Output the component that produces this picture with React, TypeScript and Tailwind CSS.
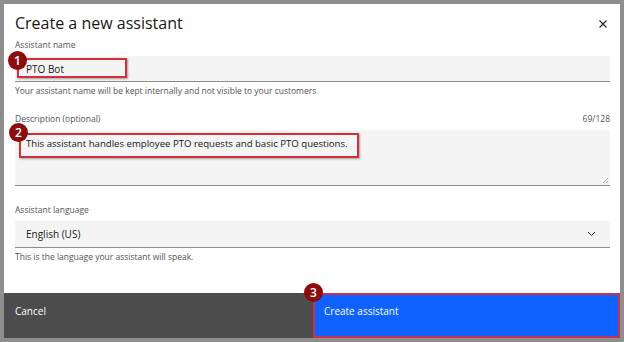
import React from 'react';

const Badge = ({ n, className }: { n: number; className: string }) => (
  <div
    className={`absolute w-[19px] h-[19px] rounded-full bg-[#8b0d0d] text-white text-[12px] font-semibold flex items-center justify-center leading-none ${className}`}
  >
    {n}
  </div>
);

export default function App() {
  return (
    <div
      className="w-[624px] h-[342px] bg-[#8e8e8e] pt-[4px] pl-[4px] overflow-hidden"
      style={{ fontFamily: '"Open Sans", "Noto Sans", sans-serif' }}
    >
      <div className="w-[616px] h-[334px] bg-white flex flex-col relative">
        <div className="flex items-start justify-between pl-[11px] pr-[10px] pt-[9px]">
          <h1 className="text-[16px] leading-[20px] text-[#161616]">Create a new assistant</h1>
          <svg width="10" height="10" viewBox="0 0 10 10" className="mt-[6px] mr-[2px]">
            <path d="M1.5 1.5L8.5 8.5M8.5 1.5L1.5 8.5" stroke="#262626" strokeWidth="1.1" />
          </svg>
        </div>

        <div className="px-[11px] pt-[6px] flex flex-col">
          {/* name */}
          <label className="text-[8.5px] leading-[12px] text-[#525252]">Assistant name</label>
          <div className="relative mt-[5px] h-[26px] bg-[#f4f4f4] border-b border-[#8d8d8d] flex items-center pl-[11px] w-[595px]">
            <div className="text-[10px] leading-[14px] text-[#161616]">PTO Bot</div>
            <div className="absolute left-[2px] top-[2px] w-[110px] h-[20px] border-2 border-[#d32f3a] shadow-[1px_1px_2px_rgba(0,0,0,0.35)]" />
            <Badge n={1} className="-left-[7px] -top-[5px]" />
          </div>
          <p className="text-[8.5px] leading-[12px] text-[#525252] mt-[3px]">
            Your assistant name will be kept internally and not visible to your customers
          </p>

          {/* description */}
          <div className="flex justify-between mt-[16px] w-[595px]">
            <label className="text-[8.5px] leading-[12px] text-[#525252]">Description (optional)</label>
            <span className="text-[8.5px] leading-[12px] text-[#525252]">69/128</span>
          </div>
          <div className="relative mt-[5px] h-[56px] bg-[#f4f4f4] border-b border-[#8d8d8d] pl-[11px] pt-[7px] w-[595px]">
            <div className="text-[9.6px] leading-[14px] text-[#161616]">
              This assistant handles employee PTO requests and basic PTO questions.
            </div>
            <div className="absolute left-[4px] top-[3px] w-[340px] h-[25px] border-2 border-[#d32f3a] shadow-[1px_1px_2px_rgba(0,0,0,0.35)]" />
            <Badge n={2} className="-left-[6px] -top-[7px]" />
            <svg width="7" height="7" viewBox="0 0 7 7" className="absolute right-[1px] bottom-[1px]">
              <path d="M1 6L6 1M4 6L6 4" stroke="#8d8d8d" strokeWidth="0.8" />
            </svg>
          </div>

          {/* language */}
          <label className="text-[8.5px] leading-[12px] text-[#525252] mt-[18px]">Assistant language</label>
          <div className="mt-[5px] h-[27px] bg-[#f4f4f4] border-b border-[#8d8d8d] flex items-center justify-between pl-[11px] pr-[14px] w-[595px]">
            <div className="text-[10px] leading-[14px] text-[#161616]">English (US)</div>
            <svg width="9" height="6" viewBox="0 0 9 6">
              <path d="M1 1L4.5 4.5L8 1" stroke="#262626" strokeWidth="1" fill="none" />
            </svg>
          </div>
          <p className="text-[8.5px] leading-[12px] text-[#525252] mt-[3px]">
            This is the language your assistant will speak.
          </p>
        </div>

        <div className="mt-auto h-[45px] flex">
          <div className="w-[309px] bg-[#4c4c4c] pl-[11px] pt-[11px]">
            <div className="text-[10px] leading-[14px] text-white">Cancel</div>
          </div>
          <div className="relative flex-1 bg-[#0f62fe] border-2 border-[#c8334a] pl-[9px] pt-[9px]">
            <div className="text-[10px] leading-[14px] text-white">Create assistant</div>
            <Badge n={3} className="-left-[11px] -top-[12px]" />
          </div>
        </div>
      </div>
    </div>
  );
}
